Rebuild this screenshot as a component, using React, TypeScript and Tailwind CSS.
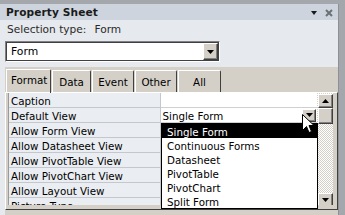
import React from "react";

const labels = [
  "Caption",
  "Default View",
  "Allow Form View",
  "Allow Datasheet View",
  "Allow PivotTable View",
  "Allow PivotChart View",
  "Allow Layout View",
  "Picture Type",
];

const items = ["Single Form", "Continuous Forms", "Datasheet", "PivotTable", "PivotChart", "Split Form"];

function SmallBtn({ up = false, cls = "" }: { up?: boolean; cls?: string }) {
  return (
    <div
      className={
        "flex items-center justify-center bg-[#d4d0c8] border border-t-white border-l-white border-r-[#404040] border-b-[#404040] shadow-[inset_-1px_-1px_0_#808080] " +
        cls
      }
    >
      <svg width="7" height="4" viewBox="0 0 7 4">
        <path d={up ? "M0 4H7L3.5 0Z" : "M0 0H7L3.5 4Z"} fill="#000" />
      </svg>
    </div>
  );
}

export default function App() {
  return (
    <div className="relative w-[345px] h-[215px] overflow-hidden bg-[#a4a8ad] pt-[4px] pr-[6px] font-['DejaVu_Sans',sans-serif] text-[10.3px] leading-none text-black">
      <div className="h-[211px] bg-[#e6e9ed] flex flex-col border-r border-r-[#8d9196]">
        {/* title bar */}
        <div className="h-[16px] bg-[#cdd4dd] flex items-center pl-[6px] pr-[5px] pt-[1px]">
          <span className="font-bold text-[10.6px] text-[#1a1a1a] tracking-[0.1px]">Property Sheet</span>
          <div className="ml-auto flex items-center gap-[8px]">
            <svg width="6" height="4" viewBox="0 0 6 4">
              <path d="M0 0H6L3 4Z" fill="#1a1a1a" />
            </svg>
            <svg width="8" height="8" viewBox="0 0 8 8">
              <path d="M1 1L7 7M7 1L1 7" stroke="#6c7176" strokeWidth="2" />
            </svg>
          </div>
        </div>
        {/* selection type */}
        <div className="h-[16px] flex items-center pl-[7px] mt-[1px] pt-[1px] text-[10.6px] text-[#2a2a2a]">
          <span>Selection type:</span>
          <span className="ml-[8px]">Form</span>
        </div>
        {/* combo */}
        <div className="ml-[5px] mt-[4px] w-[215px] h-[21px] border border-t-[#808080] border-l-[#808080] border-r-white border-b-white">
          <div className="h-full border border-[#404040] bg-white flex items-center">
            <span className="pl-[4px] pt-[1px] text-[10.8px]">Form</span>
            <SmallBtn cls="ml-auto w-[15px] h-[17px]" />
          </div>
        </div>
        {/* tab control */}
        <div className="ml-[5px] mt-[5px] flex-1 bg-[#d4d0c8] flex flex-col">
          <div className="h-[25px] flex items-end pl-[1px]">
            <div className="w-[45px] h-[24px] border-t border-l border-white border-r border-r-[#404040] rounded-tr-[2px] flex items-start pt-[5px] pl-[4px] relative top-[1px]">
              <span>Format</span>
            </div>
            <div className="ml-[1px] w-[39px] h-[22px] border-t border-l border-white border-r border-r-[#404040] rounded-tr-[2px] flex items-center justify-center pt-[2px]">
              Data
            </div>
            <div className="ml-[1px] w-[42px] h-[22px] border-t border-l border-white border-r border-r-[#404040] rounded-tr-[2px] flex items-center justify-center pt-[2px]">
              Event
            </div>
            <div className="ml-[1px] w-[42px] h-[22px] border-t border-l border-white border-r border-r-[#404040] rounded-tr-[2px] flex items-center justify-center pt-[2px]">
              Other
            </div>
            <div className="ml-[1px] w-[43px] h-[22px] border-t border-l border-white border-r border-r-[#404040] rounded-tr-[2px] flex items-center justify-center pt-[2px]">
              All
            </div>
          </div>
          <div className="h-[118px] border-t border-l border-white border-r border-r-[#404040] border-b border-b-[#404040] pl-[2px] pr-[4px] pb-[3px] flex">
            {/* grid */}
            <div className="flex-1 h-[112px] overflow-hidden flex border-l border-l-[#9a9a9a]">
              <div className="w-[152px] flex flex-col">
                {labels.map((l) => (
                  <div
                    key={l}
                    className="h-[15px] shrink-0 bg-[#eaedf1] border-b border-b-[#c4c7cc] border-r border-r-[#c4c7cc] flex items-center pl-[2px] pt-[3px]"
                  >
                    {l}
                  </div>
                ))}
              </div>
              <div className="w-[157px] flex flex-col bg-white">
                {labels.map((l, i) => (
                  <div key={l} className="h-[15px] shrink-0 border-b border-b-[#d0d0d0] flex items-center pl-[2px]">
                    {i === 1 ? (
                      <>
                        <span className="pt-[3px]">Single Form</span>
                        <SmallBtn cls="ml-auto mr-[1px] w-[14px] h-[13px]" />
                      </>
                    ) : null}
                  </div>
                ))}
              </div>
              {/* scrollbar */}
              <div className="w-[16px] flex flex-col bg-[repeating-conic-gradient(#ffffff_0_25%,#d4d0c8_0_50%)] bg-[length:2px_2px]">
                <SmallBtn up cls="h-[14px] mt-[1px] ml-[1px]" />
                <div className="h-[16px] ml-[1px] bg-[#d4d0c8] border border-t-white border-l-white border-r-[#404040] border-b-[#404040] shadow-[inset_-1px_-1px_0_#808080]" />
                <div className="flex-1" />
                <SmallBtn cls="h-[14px] ml-[1px] shrink-0 mb-[-2px]" />
              </div>
            </div>
          </div>
        </div>
      </div>

      {/* dropdown list */}
      <div className="absolute left-[161px] top-[123px] w-[157px] h-[86px] border border-black bg-white flex flex-col">
        {items.map((it, i) => (
          <div
            key={it}
            className={
              "h-[14px] shrink-0 flex items-center pl-[5px] pt-[2px] " +
              (i === 0 ? "bg-black text-white" : "text-black")
            }
          >
            {it}
          </div>
        ))}
      </div>

      {/* cursor */}
      <svg className="absolute left-[302px] top-[114px]" width="13" height="21" viewBox="0 0 13 21">
        <path d="M0.5 0.5V16.5L4.5 12.5L7 18.5L9.5 17.5L7 11.5H12Z" fill="#fff" stroke="#000" strokeWidth="1" />
      </svg>
    </div>
  );
}
